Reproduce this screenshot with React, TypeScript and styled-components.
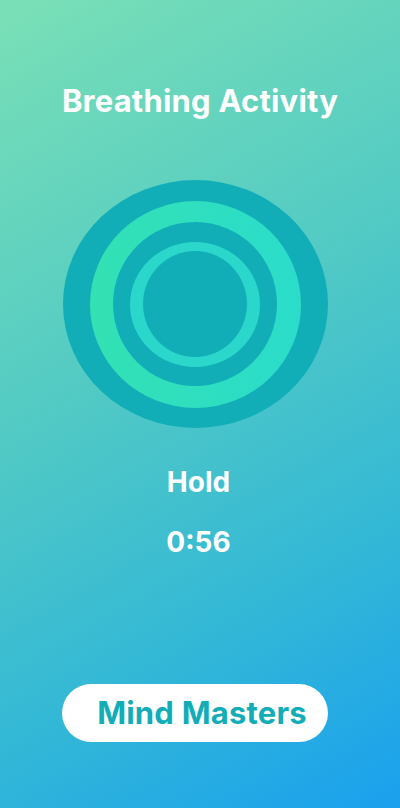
import React from "react";
import styled, { createGlobalStyle } from "styled-components";

const Global = createGlobalStyle`
  html, body { margin: 0; padding: 0; }
  body { font-family: Inter, "Noto Sans", sans-serif; }
`;

const Screen = styled.div`
  width: 400px;
  height: 808px;
  box-sizing: border-box;
  background: linear-gradient(150deg, #7ae0b6 0%, #52cac4 42%, #33b8d6 72%, #1aa0ee 100%);
  display: flex;
  flex-direction: column;
  align-items: center;
  padding-top: 83px;
  overflow: hidden;
`;

const Title = styled.h1`
  margin: 0;
  font-size: 31px;
  line-height: 36px;
  font-weight: 700;
  color: #ffffff;
  letter-spacing: 0.2px;
`;

const Ring = styled.div<{ $w: number; $h: number; $bg: string }>`
  width: ${(p) => p.$w}px;
  height: ${(p) => p.$h}px;
  border-radius: 50%;
  background: ${(p) => p.$bg};
  display: flex;
  align-items: center;
  justify-content: center;
  flex-shrink: 0;
`;

const Breather = styled.div`
  margin-top: 61px;
  margin-right: 10px;
`;

const Label = styled.div<{ $mt: number }>`
  margin-top: ${(p) => p.$mt}px;
  margin-right: 3px;
  font-size: 28px;
  line-height: 34px;
  font-weight: 700;
  color: #ffffff;
`;

const Brand = styled.button`
  margin-top: 125px;
  margin-right: 10px;
  width: 266px;
  height: 58px;
  border: none;
  border-radius: 29px;
  background: #ffffff;
  color: #12adb7;
  font-family: Inter, "Noto Sans", sans-serif;
  font-size: 31px;
  line-height: 58px;
  font-weight: 700;
  letter-spacing: 0.2px;
  padding: 0 0 0 14px;
  text-align: center;
  white-space: nowrap;
`;

const DARK = "#11aeb8";
const GREEN = "linear-gradient(90deg, #33e1b3 0%, #2bdccb 100%)";
const AQUA = "#2ad7ca";

export default function App() {
  return (
    <>
      <Global />
      <Screen>
        <Title>Breathing Activity</Title>
        <Breather>
          <Ring $w={265} $h={248} $bg={DARK}>
            <Ring $w={211} $h={207} $bg={GREEN}>
              <Ring $w={164} $h={164} $bg={DARK}>
                <Ring $w={130} $h={125} $bg={AQUA}>
                  <Ring $w={104} $h={106} $bg={DARK} />
                </Ring>
              </Ring>
            </Ring>
          </Ring>
        </Breather>
        <Label $mt={37}>Hold</Label>
        <Label $mt={26}>0:56</Label>
        <Brand>Mind Masters</Brand>
      </Screen>
    </>
  );
}
